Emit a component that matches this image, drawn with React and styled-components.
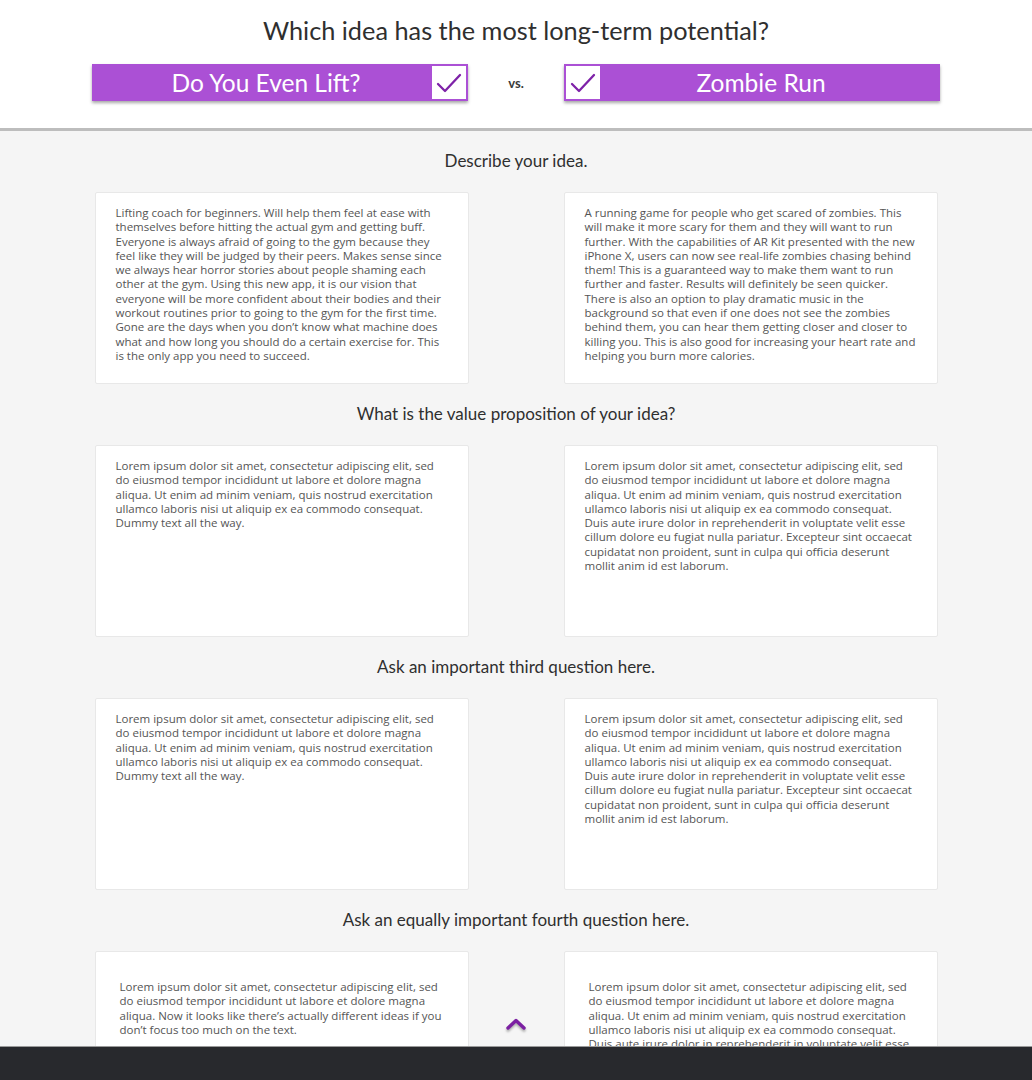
import React from "react";
import styled, { createGlobalStyle } from "styled-components";

const purple = "#ab50d5";
const deepPurple = "#7e22a8";

const GlobalStyle = createGlobalStyle`
    html, body {
        margin: 0;
        padding: 0;
        background: #f5f5f5;
    }
    * {
        box-sizing: border-box;
    }
`;

const Page = styled.div`
    min-height: 100vh;
    background: #f5f5f5;
    padding-bottom: 80px;
`;

const Header = styled.header`
    background: #ffffff;
    height: 131px;
    border-bottom: 3px solid #bdbdbd;
    display: flex;
    flex-direction: column;
    align-items: center;
    padding-top: 13px;
`;

const Title = styled.h1`
    margin: 0;
    font-family: Lato, "Open Sans", sans-serif;
    font-weight: 400;
    font-size: 25.3px;
    line-height: 34px;
    color: #2f2f2f;
`;

const Choices = styled.div`
    display: grid;
    grid-template-columns: 376px 96px 376px;
    margin-top: 17px;
    align-items: center;
`;

const Choice = styled.div`
    height: 37px;
    background: ${purple};
    box-shadow: 0 2px 3px rgba(0, 0, 0, 0.35);
    display: flex;
    flex-direction: ${(props) => (props.checkFirst ? "row-reverse" : "row")};
    align-items: center;
`;

const ChoiceLabel = styled.span`
    flex: 1;
    text-align: center;
    padding: ${(props) => (props.checkFirst ? "0 20px 0 0" : "0 0 0 10px")};
    font-family: Lato, "Open Sans", sans-serif;
    font-size: 24.5px;
    color: #ffffff;
    line-height: 37px;
`;

const CheckBox = styled.span`
    width: 38px;
    height: 37px;
    background: #ffffff;
    border: 2px solid ${purple};
    display: flex;
    align-items: center;
    justify-content: center;
`;

const Versus = styled.span`
    text-align: center;
    font-family: Lato, "Open Sans", sans-serif;
    font-size: 13px;
    font-weight: 700;
    color: #3a3a3a;
`;

const Main = styled.main`
    width: 843px;
    margin: 0 auto;
`;

const Question = styled.h2`
    margin: 0;
    padding: 19px 0 20px;
    text-align: center;
    font-family: Lato, "Open Sans", sans-serif;
    font-weight: 400;
    font-size: 17px;
    line-height: 22px;
    color: #2f2f2f;
`;

const Pair = styled.div`
    display: grid;
    grid-template-columns: 374px 374px;
    justify-content: space-between;
`;

const Card = styled.div`
    height: 192px;
    background: #ffffff;
    border: 1px solid #e8e8e8;
    border-radius: 2px;
    padding: ${(props) => (props.roomy ? "28px 24px" : "13px 20px")};
    font-family: "Open Sans", sans-serif;
    font-size: 11.5px;
    line-height: 14.3px;
    color: #555555;
`;

const UpButton = styled.div`
    position: fixed;
    left: 50%;
    bottom: 49px;
    transform: translateX(-50%);
    filter: drop-shadow(0 2px 1px rgba(0, 0, 0, 0.3));
    line-height: 0;
`;

const Footer = styled.footer`
    position: fixed;
    left: 0;
    right: 0;
    bottom: 0;
    height: 34px;
    background: #28292d;
    border-top: 1px solid #9a9a9a;
`;

const lorem =
    "Lorem ipsum dolor sit amet, consectetur adipiscing elit, sed do eiusmod tempor incididunt ut labore et dolore magna aliqua. Ut enim ad minim veniam, quis nostrud exercitation ullamco laboris nisi ut aliquip ex ea commodo consequat.";
const loremLong =
    lorem +
    " Duis aute irure dolor in reprehenderit in voluptate velit esse cillum dolore eu fugiat nulla pariatur. Excepteur sint occaecat cupidatat non proident, sunt in culpa qui officia deserunt mollit anim id est laborum.";

const questions = [
    {
        title: "Describe your idea.",
        left: "Lifting coach for beginners. Will help them feel at ease with themselves before hitting the actual gym and getting buff. Everyone is always afraid of going to the gym because they feel like they will be judged by their peers. Makes sense since we always hear horror stories about people shaming each other at the gym. Using this new app, it is our vision that everyone will be more confident about their bodies and their workout routines prior to going to the gym for the first time. Gone are the days when you don’t know what machine does what and how long you should do a certain exercise for. This is the only app you need to succeed.",
        right: "A running game for people who get scared of zombies. This will make it more scary for them and they will want to run further. With the capabilities of AR Kit presented with the new iPhone X, users can now see real-life zombies chasing behind them! This is a guaranteed way to make them want to run further and faster. Results will definitely be seen quicker. There is also an option to play dramatic music in the background so that even if one does not see the zombies behind them, you can hear them getting closer and closer to killing you. This is also good for increasing your heart rate and helping you burn more calories.",
    },
    {
        title: "What is the value proposition of your idea?",
        left: lorem + " Dummy text all the way.",
        right: loremLong,
    },
    {
        title: "Ask an important third question here.",
        left: lorem + " Dummy text all the way.",
        right: loremLong,
    },
    {
        title: "Ask an equally important fourth question here.",
        left: "Lorem ipsum dolor sit amet, consectetur adipiscing elit, sed do eiusmod tempor incididunt ut labore et dolore magna aliqua. Now it looks like there’s actually different ideas if you don’t focus too much on the text.",
        right: loremLong,
        roomy: true,
    },
];

const Check = () => (
    <svg width="26" height="22" viewBox="0 0 26 22" fill="none">
        <path
            d="M2 12 L9 19 L24 3"
            stroke={deepPurple}
            strokeWidth="2.3"
            strokeLinecap="round"
            strokeLinejoin="round"
        />
    </svg>
);

export default function App() {
    return (
        <Page>
            <GlobalStyle />
            <Header>
                <Title>Which idea has the most long-term potential?</Title>
                <Choices>
                    <Choice>
                        <ChoiceLabel>Do You Even Lift?</ChoiceLabel>
                        <CheckBox>
                            <Check />
                        </CheckBox>
                    </Choice>
                    <Versus>vs.</Versus>
                    <Choice checkFirst>
                        <ChoiceLabel checkFirst>Zombie Run</ChoiceLabel>
                        <CheckBox>
                            <Check />
                        </CheckBox>
                    </Choice>
                </Choices>
            </Header>
            <Main>
                {questions.map((q) => (
                    <section key={q.title}>
                        <Question>{q.title}</Question>
                        <Pair>
                            <Card roomy={q.roomy}>{q.left}</Card>
                            <Card roomy={q.roomy}>{q.right}</Card>
                        </Pair>
                    </section>
                ))}
            </Main>
            <UpButton>
                <svg width="22" height="14" viewBox="0 0 22 14" fill="none">
                    <path
                        d="M3 11 L11 3.5 L19 11"
                        stroke="#7b1fa2"
                        strokeWidth="3.4"
                        strokeLinecap="round"
                        strokeLinejoin="round"
                    />
                </svg>
            </UpButton>
            <Footer />
        </Page>
    );
}
